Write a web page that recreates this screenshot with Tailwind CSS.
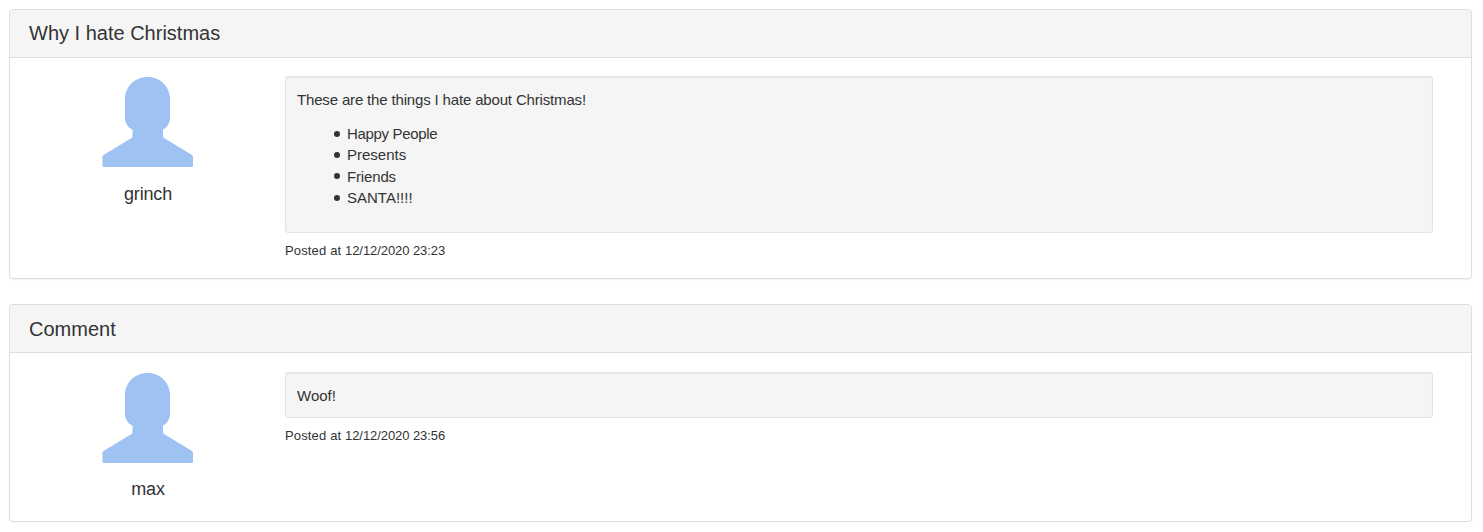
<!DOCTYPE html>
<html lang="en">
<head>
<meta charset="utf-8">
<title>Why I hate Christmas</title>
<script src="https://cdn.jsdelivr.net/npm/@tailwindcss/browser@4"></script>
</head>
<body class="bg-white pt-[9px] pl-[9px] pr-[11px] font-['Liberation_Sans',Arial,sans-serif] text-[15px] leading-[21.43px] text-[#333333]">
<main class="flex flex-col gap-[25px]">
  <section class="h-[270px] rounded-[4px] border border-[#dddddd] bg-white shadow-[0_1px_1px_rgba(0,0,0,0.05)]">
    <header class="h-[48px] rounded-t-[3px] border-b border-[#dddddd] bg-[#f5f5f5] pl-[19px]">
      <h3 class="pt-[12px] text-[20px] leading-[22px]">Why I hate Christmas</h3>
    </header>
    <div class="flex pt-[18px] pr-[38px]">
      <div class="flex w-[275px] shrink-0 flex-col items-center pt-px">
        <svg class="h-[90px] w-[91px]" viewBox="0 0 91 90" fill="#9ec2f2"><path d="M45.500 0C58.500 0 68 10 68 22V41C68 46 65 51 61 52.500V59Q61 60.500 62 61L90 78Q91 79 91 80V88.500Q91 90 89.500 90H2Q.5 90 .5 88.500V80Q.5 79 1.500 78L29.500 61Q30.500 60.500 30.500 59V52.500C26 51 23 46 23 41V22C23 10 32.500 0 45.500 0Z"/></svg>
        <h4 class="mt-[17px] pl-px text-[18px] leading-[20px] tracking-[-0.15px]">grinch</h4>
      </div>
      <div class="min-w-0 flex-1">
        <div class="h-[157px] rounded-[3px] border border-[#e3e3e3] bg-[#f5f5f5] pt-[12px] pl-[11px] shadow-[inset_0_1px_1px_rgba(0,0,0,0.05)]">
          <p class="tracking-[-0.16px]">These are the things I hate about Christmas!</p>
          <ul class="mt-[12.4px] pl-[37px]">
            <li class="flex items-center gap-[7px]"><span class="size-[6px] rounded-full bg-[#333333]"></span><span class="tracking-[-0.33px]">Happy People</span></li>
            <li class="flex items-center gap-[7px]"><span class="size-[6px] rounded-full bg-[#333333]"></span><span>Presents</span></li>
            <li class="flex items-center gap-[7px]"><span class="size-[6px] rounded-full bg-[#333333]"></span><span class="tracking-[-0.15px]">Friends</span></li>
            <li class="flex items-center gap-[7px]"><span class="size-[6px] rounded-full bg-[#333333]"></span><span>SANTA!!!!</span></li>
          </ul>
        </div>
        <p class="mt-[9px] text-[13px] leading-[18px]"><span class="tracking-[0.15px]">Posted at </span><span class="tracking-[-0.07px]">12/12/2020 23:23</span></p>
      </div>
    </div>
  </section>
  <section class="h-[218px] rounded-[4px] border border-[#dddddd] bg-white shadow-[0_1px_1px_rgba(0,0,0,0.05)]">
    <header class="h-[48px] rounded-t-[3px] border-b border-[#dddddd] bg-[#f5f5f5] pl-[19px]">
      <h3 class="pt-[13px] text-[20px] leading-[22px]">Comment</h3>
    </header>
    <div class="flex pt-[19px] pr-[38px]">
      <div class="flex w-[275px] shrink-0 flex-col items-center pt-px">
        <svg class="h-[90px] w-[91px]" viewBox="0 0 91 90" fill="#9ec2f2"><path d="M45.500 0C58.500 0 68 10 68 22V41C68 46 65 51 61 52.500V59Q61 60.500 62 61L90 78Q91 79 91 80V88.500Q91 90 89.500 90H2Q.5 90 .5 88.500V80Q.5 79 1.500 78L29.500 61Q30.500 60.500 30.500 59V52.500C26 51 23 46 23 41V22C23 10 32.500 0 45.500 0Z"/></svg>
        <h4 class="mt-[16px] pl-px text-[18px] leading-[20px] tracking-[-0.15px]">max</h4>
      </div>
      <div class="min-w-0 flex-1">
        <div class="h-[46px] rounded-[3px] border border-[#e3e3e3] bg-[#f5f5f5] pt-[12px] pl-[11px] shadow-[inset_0_1px_1px_rgba(0,0,0,0.05)]">
          <p>Woof!</p>
        </div>
        <p class="mt-[9px] text-[13px] leading-[18px]"><span class="tracking-[0.15px]">Posted at </span><span class="tracking-[-0.07px]">12/12/2020 23:56</span></p>
      </div>
    </div>
  </section>
</main>
</body>
</html>
